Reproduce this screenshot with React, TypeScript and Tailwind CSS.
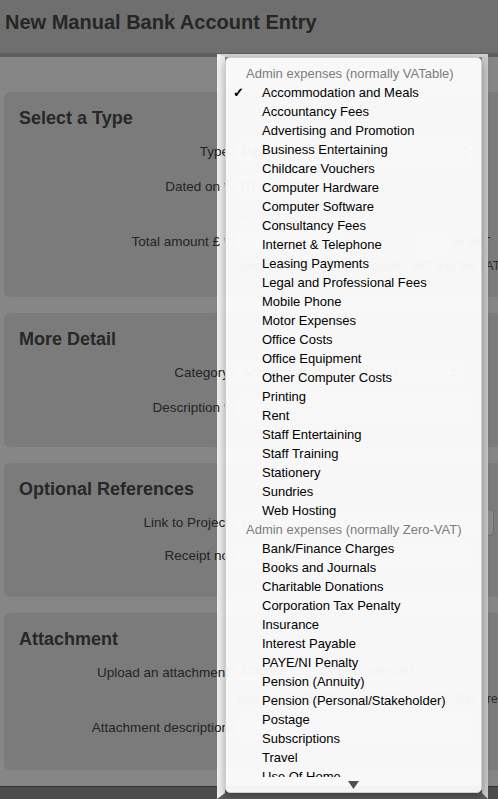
import React from "react";

const vatable = [
  "Accommodation and Meals",
  "Accountancy Fees",
  "Advertising and Promotion",
  "Business Entertaining",
  "Childcare Vouchers",
  "Computer Hardware",
  "Computer Software",
  "Consultancy Fees",
  "Internet & Telephone",
  "Leasing Payments",
  "Legal and Professional Fees",
  "Mobile Phone",
  "Motor Expenses",
  "Office Costs",
  "Office Equipment",
  "Other Computer Costs",
  "Printing",
  "Rent",
  "Staff Entertaining",
  "Staff Training",
  "Stationery",
  "Sundries",
  "Web Hosting",
];

const zeroVat = [
  "Bank/Finance Charges",
  "Books and Journals",
  "Charitable Donations",
  "Corporation Tax Penalty",
  "Insurance",
  "Interest Payable",
  "PAYE/NI Penalty",
  "Pension (Annuity)",
  "Pension (Personal/Stakeholder)",
  "Postage",
  "Subscriptions",
  "Travel",
  "Use Of Home",
];

function Spinner() {
  return (
    <svg width="7" height="11" viewBox="0 0 7 11" className="shrink-0">
      <path d="M3.5 0.5 L6.5 4 L0.5 4 Z" fill="#3a3a3a" />
      <path d="M3.5 10.5 L6.5 7 L0.5 7 Z" fill="#3a3a3a" />
    </svg>
  );
}

function Label({ text, req }: { text: string; req?: boolean }) {
  return (
    <div className="relative z-20 w-[225px] shrink-0 text-right text-[13.5px] leading-[20px] text-[#242424] whitespace-nowrap">
      {text}
      {req && <span className="text-[#c01010]"> *</span>}
    </div>
  );
}

function Input({ w, value, select }: { w: number; value?: string; select?: boolean }) {
  return (
    <div
      className="ml-[6px] mt-[-4px] h-[27px] flex items-center justify-between px-[6px] rounded-[4px] border border-[#6e6e6e] bg-[#8a8a8a] text-[13px] text-[#2a2a2a] shrink-0"
      style={{ width: w }}
    >
      <span>{value}</span>
      {select && <Spinner />}
    </div>
  );
}

function Panel({ title, h, children }: { title: string; h: number; children: React.ReactNode }) {
  return (
    <section
      className="ml-[4px] w-[520px] rounded-[6px] bg-[#7b7b7b] pt-[15px] mb-[16px]"
      style={{ height: h }}
    >
      <h2 className="pl-[15px] text-[18px] leading-[22px] font-bold text-[#272727]">{title}</h2>
      <div className="mt-[13px]">{children}</div>
    </section>
  );
}

export default function App() {
  return (
    <div
      className="relative w-[498px] h-[799px] overflow-hidden flex flex-col bg-[#868686]"
      style={{ fontFamily: '"Liberation Sans", Arial, Helvetica, sans-serif' }}
    >
      {/* Header */}
      <header className="h-[57px] shrink-0 bg-[#6f6f6f] border-b-[4px] border-[#5e5e5e] px-[5px] pt-[9px]">
        <h1 className="text-[20px] leading-[26px] font-bold text-[#262626] whitespace-nowrap">
          New Manual Bank Account Entry
        </h1>
      </header>

      <main className="flex-1 pt-[35px]">
        <Panel title="Select a Type" h={205}>
          <div className="flex h-[35px]">
            <Label text="Type" />
            <Input w={240} value="Payment" select />
          </div>
          <div className="flex h-[55px]">
            <Label text="Dated on" req />
            <div>
              <Input w={110} value="07 Feb 2013" />
              <div className="ml-[8px] mt-[6px] text-[11px] text-[#3a3a3a]">dd mmm yyyy</div>
            </div>
          </div>
          <div className="flex">
            <Label text="Total amount £" req />
            <div>
              <div className="flex items-start">
                <Input w={110} />
                <div className="ml-[72px] mt-[-4px] h-[27px] w-[30px] rounded-[4px] border border-[#6e6e6e] bg-[#8a8a8a]" />
                <span className="ml-[5px] text-[13px] leading-[20px] text-[#242424] whitespace-nowrap">% VAT</span>
              </div>
              <div className="ml-[8px] mt-[2px] text-[12px] text-[#2a2a2a] whitespace-nowrap">
                Select whether amount includes VAT and the VAT rate for this
              </div>
            </div>
          </div>
        </Panel>

        <Panel title="More Detail" h={134}>
          <div className="flex h-[35px] mt-[1px]">
            <Label text="Category" />
            <Input w={229} value="Accommodation and Meals" select />
          </div>
          <div className="flex">
            <Label text="Description" req />
            <Input w={240} />
          </div>
        </Panel>

        <Panel title="Optional References" h={134}>
          <div className="flex h-[33px] mt-[1px]">
            <Label text="Link to Project" />
            <Input w={259} value="None" select />
          </div>
          <div className="flex">
            <Label text="Receipt no" />
            <Input w={240} />
          </div>
        </Panel>

        <Panel title="Attachment" h={157}>
          <div className="flex h-[55px] mt-[1px]">
            <Label text="Upload an attachment" />
            <div>
              <div className="ml-[6px] mt-[-3px] flex items-center gap-[6px] text-[13px] text-[#2a2a2a]">
                <span className="rounded-[4px] border border-[#6e6e6e] bg-[#8a8a8a] px-[6px] h-[22px] leading-[20px]">Choose File</span>
                <span>No file selected</span>
              </div>
              <div className="ml-[8px] mt-[8px] text-[12px] text-[#2a2a2a] whitespace-nowrap">
                Max size 5MB. JPG, PNG, GIF and PDF files are allowed
              </div>
            </div>
          </div>
          <div className="flex">
            <Label text="Attachment description" />
            <Input w={240} />
          </div>
        </Panel>
      </main>

      {/* Footer bar */}
      <footer className="h-[16px] shrink-0 border-t border-[#333333] bg-[#4c4c4c]" />

      {/* Light halo behind the popup menu */}
      <div className="absolute z-10 left-[217px] top-[54px] w-[271px] h-[745px] border-l-[8px] border-r-[6px] border-t-[3px] border-b-[6px] border-l-[#f1f1f1] border-r-[#cbcbcb] border-t-[#d8d8d8] border-b-[#5a5a5a]" />

      {/* Popup menu */}
      <div className="absolute z-30 left-[225px] top-[57px] w-[257px] h-[736px] rounded-[5px] border border-[#cfcfcf] bg-white/[0.94] shadow-[0_3px_10px_rgba(0,0,0,0.35)] pt-[6px] text-[13px] text-black">
        <div className="h-[713px] overflow-hidden">
          <div className="h-[19px] leading-[19px] pl-[20px] text-[#7c7c7c] whitespace-nowrap">
            Admin expenses (normally VATable)
          </div>
          {vatable.map((item, i) => (
            <div key={item} className="relative h-[19px] leading-[19px] pl-[36px] whitespace-nowrap">
              {i === 0 && <span className="absolute left-[7px] top-0 font-bold">✓</span>}
              {item}
            </div>
          ))}
          <div className="h-[19px] leading-[19px] pl-[20px] text-[#7c7c7c] whitespace-nowrap">
            Admin expenses (normally Zero-VAT)
          </div>
          {zeroVat.map((item) => (
            <div key={item} className="h-[19px] leading-[19px] pl-[36px] whitespace-nowrap">
              {item}
            </div>
          ))}
        </div>
        <div className="h-[15px] flex items-center justify-center">
          <svg width="11" height="8" viewBox="0 0 11 8">
            <path d="M0 0 L11 0 L5.5 8 Z" fill="#505050" />
          </svg>
        </div>
      </div>
    </div>
  );
}
